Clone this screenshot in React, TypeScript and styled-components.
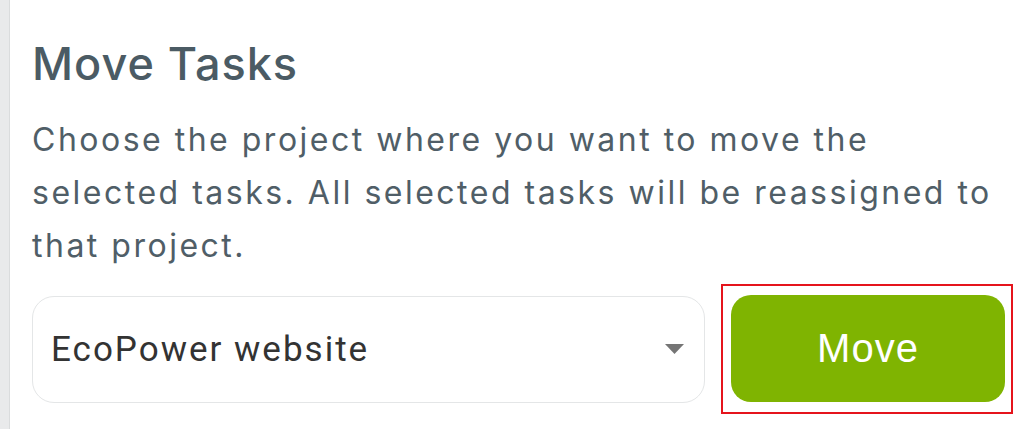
import React from 'react';
import styled, { createGlobalStyle } from 'styled-components';

const GlobalStyle = createGlobalStyle`
  html, body {
    margin: 0;
    padding: 0;
    background: #e9eaeb;
    overflow: hidden;
  }
`;

const Page = styled.div`
  display: flex;
  height: 429px;
`;

const Panel = styled.div`
  flex: 1;
  margin-left: 9px;
  border-left: 1px solid #dadcdd;
  background: #ffffff;
  padding: 37px 12px 0 22px;
  box-sizing: border-box;
`;

const Title = styled.h2`
  margin: 0;
  font-family: Inter, 'Noto Sans', sans-serif;
  font-weight: 500;
  font-size: 45px;
  letter-spacing: 1px;
  line-height: 54px;
  color: #4b5b64;
`;

const Description = styled.p`
  margin: 22px 0 0;
  max-width: 978px;
  font-family: Inter, 'Noto Sans', sans-serif;
  font-weight: 400;
  font-size: 32px;
  letter-spacing: 2.5px;
  line-height: 53px;
  color: #505e67;
`;

const Footer = styled.div`
  display: flex;
  align-items: center;
  margin-top: 12px;
`;

const Select = styled.div`
  width: 673px;
  height: 107px;
  box-sizing: border-box;
  border: 1px solid #e4e6e7;
  border-radius: 22px;
  display: flex;
  align-items: center;
  justify-content: space-between;
  padding: 0 20px 0 18px;
  font-family: Roboto, 'Liberation Sans', sans-serif;
  font-size: 35px;
  letter-spacing: 2px;
  color: #333333;
`;

const Caret = styled.svg`
  width: 19px;
  height: 10px;
  fill: #757575;
`;

const Highlight = styled.div`
  margin-left: 16px;
  border: 2px solid #e5141c;
  padding: 9px 6px 10px 8px;
`;

const MoveButton = styled.button`
  width: 274px;
  height: 107px;
  border: none;
  border-radius: 20px;
  background: #7fb401;
  color: #ffffff;
  font-family: 'Liberation Sans', Arial, sans-serif;
  font-size: 40px;
  letter-spacing: 1px;
  display: flex;
  align-items: center;
  justify-content: center;
  padding: 0;
`;

export default function App() {
  return (
    <>
      <GlobalStyle />
      <Page>
        <Panel>
          <Title>Move Tasks</Title>
          <Description>
            Choose the project where you want to move the selected tasks. All
            selected tasks will be reassigned to that project.
          </Description>
          <Footer>
            <Select>
              <span>EcoPower website</span>
              <Caret viewBox="0 0 19 10">
                <path d="M0 0h19L9.5 10z" />
              </Caret>
            </Select>
            <Highlight>
              <MoveButton>Move</MoveButton>
            </Highlight>
          </Footer>
        </Panel>
      </Page>
    </>
  );
}
